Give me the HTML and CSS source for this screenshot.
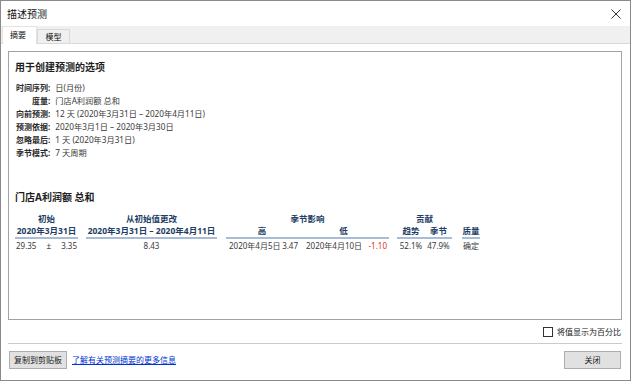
FILE: index.html
```html
<!DOCTYPE html>
<html lang="zh-CN">
<head>
<meta charset="utf-8">
<title>描述预测</title>
<link rel="stylesheet" href="styles.css">
</head>
<body>
<div class="window">
  <div class="titlebar">
    <span class="title">描述预测</span>
    <svg class="close" width="10" height="10" viewBox="0 0 10 10"><path d="M0.5 0.5L9.5 9.5M9.5 0.5L0.5 9.5" stroke="#333" stroke-width="1"/></svg>
  </div>
  <div class="tabs">
    <div class="tab active">摘要</div>
    <div class="tab">模型</div>
  </div>
  <div class="page">
    <div class="panel">
      <div class="heading">用于创建预测的选项</div>
      <div class="info">
        <span class="lbl">时间序列:</span><span class="val">日(月份)</span>
        <span class="lbl">度量:</span><span class="val">门店A利润额 总和</span>
        <span class="lbl">向前预测:</span><span class="val">12 天 (2020年3月31日 – 2020年4月11日)</span>
        <span class="lbl">预测依据:</span><span class="val">2020年3月1日 – 2020年3月30日</span>
        <span class="lbl">忽略最后:</span><span class="val">1 天 (2020年3月31日)</span>
        <span class="lbl">季节模式:</span><span class="val">7 天周期</span>
      </div>
      <div class="heading second">门店A利润额 总和</div>
      <div class="grid">
        <div class="gh r1 c1">初始</div>
        <div class="gh r1 c3">从初始值更改</div>
        <div class="gh r1 c5w">季节影响</div>
        <div class="gh r1 c8w">贡献</div>

        <div class="sh r2 c1 ul">2020年3月31日</div>
        <div class="sh r2 c3 ul">2020年3月31日 – 2020年4月11日</div>
        <div class="sh r2 c5 ul">高</div>
        <div class="sh r2 c6 ul">低</div>
        <div class="sh r2 c8 ul">趋势</div>
        <div class="sh r2 c9 ul">季节</div>
        <div class="sh r2 c11 ul">质量</div>

        <div class="d r3 c1 split pad1"><span>29.35</span><span>±</span><span>3.35</span></div>
        <div class="d r3 c3 center">8.43</div>
        <div class="d r3 c5 split padhi"><span>2020年4月5日</span><span>3.47</span></div>
        <div class="d r3 c6 split padlo"><span>2020年4月10日</span><span class="neg">-1.10</span></div>
        <div class="d r3 c8 center">52.1%</div>
        <div class="d r3 c9 center">47.9%</div>
        <div class="d r3 c11 center">确定</div>
      </div>
    </div>
    <div class="optrow">
      <label class="chk"><span class="box"></span><span>将值显示为百分比</span></label>
    </div>
  </div>
  <div class="sep"></div>
  <div class="footer">
    <button class="btn copy">复制到剪贴板</button>
    <a class="link" href="#">了解有关预测摘要的更多信息</a>
    <button class="btn closebtn">关闭</button>
  </div>
</div>
</body>
</html>
```

FILE: styles.css
```css
* { box-sizing: border-box; }
html, body { margin: 0; padding: 0; background: #ffffff; }
body {
  font-family: "Noto Sans", "Noto Sans CJK SC", sans-serif;
  font-size: 8px;
  color: #222;
}
.window {
  width: 631px;
  height: 381px;
  border: 1px solid #8a8a8a;
  display: flex;
  flex-direction: column;
  background: #fff;
}
.titlebar {
  height: 25px;
  display: flex;
  align-items: center;
  padding-left: 6px;
  padding-right: 9px;
}
.title { font-size: 10px; line-height: 12px; color: #111; }
.close { margin-left: auto; }
.tabs {
  height: 18px;
  background: #f0f0f0;
  border-bottom: 1px solid #dadada;
  display: flex;
  align-items: flex-end;
  padding-left: 1px;
}
.tab {
  height: 14px;
  width: 33px;
  border: 1px solid #d9d9d9;
  border-bottom: none;
  display: flex;
  align-items: center;
  justify-content: center;
  font-size: 8px;
  line-height: 10px;
  color: #111;
  background: #f0f0f0;
}
.tab.active {
  height: 18px;
  width: 35px;
  margin-bottom: -1px;
  background: #fff;
  border-color: #e3e3e3;
  padding-bottom: 2px;
  padding-right: 3px;
}
.page {
  padding: 7px 8px 0 7px;
  display: flex;
  flex-direction: column;
}
.panel {
  height: 269px;
  border: 1px solid #a3a3a3;
  padding: 8px 6px 0 6px;
  background: #fff;
}
.heading {
  font-size: 10px;
  line-height: 15px;
  font-weight: 700;
  color: #1e1e1e;
}
.heading.second { margin-top: 31px; }
.info {
  margin-top: 6px;
  margin-left: 1px;
  display: grid;
  grid-template-columns: max-content max-content;
  column-gap: 5px;
  justify-content: start;
  line-height: 13px;
}
.lbl { text-align: right; font-weight: 700; color: #2a2a2a; white-space: nowrap; }
.val { color: #3a3a3a; white-space: nowrap; font-size: 8.2px; }
.grid {
  margin-top: 7px;
  display: grid;
  grid-template-columns: 63px 8px 131px 9px 72px 91px 8px 28px 27px 10px 18px;
  grid-template-rows: 13px 14px 13px;
  line-height: 13px;
  white-space: nowrap;
}
.gh, .sh { font-weight: 700; color: #233d63; text-align: center; font-size: 8.5px; }
.sh { line-height: 12px; }
.ul { border-bottom: 2px solid #a9bcd6; }
.d { color: #3a3a3a; }
.r1 { grid-row: 1; }
.r2 { grid-row: 2; }
.r3 { grid-row: 3; }
.c1 { grid-column: 1; }
.c3 { grid-column: 3; }
.c5 { grid-column: 5; }
.c6 { grid-column: 6; }
.c5w { grid-column: 5 / span 2; }
.c8 { grid-column: 8; }
.c9 { grid-column: 9; }
.c8w { grid-column: 8 / span 2; }
.c11 { grid-column: 11; }
.center { text-align: center; }
.split { display: flex; justify-content: space-between; }
.pad1 { padding: 0 1px; }
.padhi { padding: 0 0 0 3px; }
.padlo { padding: 0 2px 0 8px; }
.neg { color: #e5302a; }
.optrow {
  height: 23px;
  display: flex;
  align-items: center;
  justify-content: flex-end;
  padding-right: 1px;
}
.chk { display: flex; align-items: center; gap: 4px; color: #222; line-height: 10px; }
.box {
  width: 10px;
  height: 10px;
  border: 1px solid #333;
  background: #fff;
}
.sep {
  margin: 0 8px 0 7px;
  border-top: 1px solid #cacaca;
}
.footer {
  display: flex;
  align-items: center;
  padding: 7px 9px 0 8px;
}
.btn {
  font-family: inherit;
  font-size: 8px;
  line-height: 10px;
  color: #222;
  height: 18px;
  background: #e1e1e1;
  border: 1px solid #adadad;
  border-radius: 0;
  padding: 0;
  margin: 0;
}
.copy { width: 58px; }
.closebtn { width: 57px; margin-left: auto; }
.link {
  margin-left: 5px;
  color: #0033cc;
  text-decoration: underline;
  line-height: 10px;
}
```
